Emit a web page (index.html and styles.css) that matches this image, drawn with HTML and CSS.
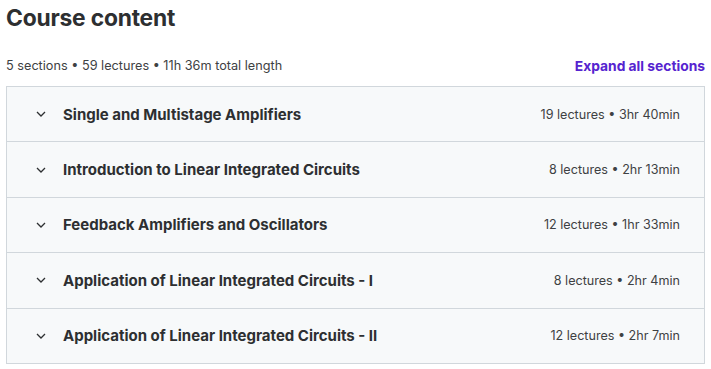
FILE: index.html
```html
<!DOCTYPE html>
<html lang="en">
<head>
  <meta charset="UTF-8" />
  <title>Course content</title>
  <link rel="stylesheet" href="styles.css">
</head>
<body>
  <main class="curriculum">
    <h2 class="curriculum-title">Course content</h2>

    <div class="curriculum-meta">
      <span>5 sections • 59 lectures • 11h 36m total length</span>
      <button class="expand-all">Expand all sections</button>
    </div>

    <ul class="section-list">
      <li class="section-row">
        <svg class="chevron" viewBox="0 0 10 6" width="10" height="6"><path d="M1 1l4 4 4-4" /></svg>
        <span class="section-name">Single and Multistage Amplifiers</span>
        <span class="section-info">19 lectures • 3hr 40min</span>
      </li>
      <li class="section-row">
        <svg class="chevron" viewBox="0 0 10 6" width="10" height="6"><path d="M1 1l4 4 4-4" /></svg>
        <span class="section-name">Introduction to Linear Integrated Circuits</span>
        <span class="section-info">8 lectures • 2hr 13min</span>
      </li>
      <li class="section-row">
        <svg class="chevron" viewBox="0 0 10 6" width="10" height="6"><path d="M1 1l4 4 4-4" /></svg>
        <span class="section-name">Feedback Amplifiers and Oscillators</span>
        <span class="section-info">12 lectures • 1hr 33min</span>
      </li>
      <li class="section-row">
        <svg class="chevron" viewBox="0 0 10 6" width="10" height="6"><path d="M1 1l4 4 4-4" /></svg>
        <span class="section-name">Application of Linear Integrated Circuits - I</span>
        <span class="section-info">8 lectures • 2hr 4min</span>
      </li>
      <li class="section-row">
        <svg class="chevron" viewBox="0 0 10 6" width="10" height="6"><path d="M1 1l4 4 4-4" /></svg>
        <span class="section-name">Application of Linear Integrated Circuits - II</span>
        <span class="section-info">12 lectures • 2hr 7min</span>
      </li>
    </ul>
  </main>
</body>
</html>
```

FILE: styles.css
```css
:root {
  --fg: #2d2f31;
  --muted: #3e4143;
  --accent: #5624d0;
  --border: #d1d7dc;
  --row-bg: #f7f9fa;
}

* {
  box-sizing: border-box;
}

body {
  margin: 0;
  font-family: Inter, "Noto Sans", sans-serif;
  color: var(--fg);
  background: #fff;
}

.curriculum {
  padding: 3px 6px 0 6px;
}

.curriculum-title {
  margin: 0;
  font-size: 22.8px;
  font-weight: 700;
  line-height: 30px;
  letter-spacing: -0.2px;
}

.curriculum-meta {
  display: flex;
  justify-content: space-between;
  align-items: center;
  margin-top: 23px;
  margin-bottom: 10px;
  font-size: 12.7px;
  line-height: 20px;
  color: var(--muted);
}

.expand-all {
  background: none;
  border: none;
  padding: 0;
  font-family: inherit;
  font-size: 13.8px;
  font-weight: 700;
  color: var(--accent);
  cursor: pointer;
}

.section-list {
  list-style: none;
  margin: 0;
  padding: 0;
  border: 1px solid var(--border);
  border-bottom: none;
}

.section-row {
  display: flex;
  align-items: center;
  height: 55.4px;
  padding: 0 24px 0 29px;
  background: var(--row-bg);
  border-bottom: 1px solid var(--border);
}

.chevron {
  flex: none;
  fill: none;
  stroke: var(--fg);
  stroke-width: 1.3;
  margin-right: 17px;
}

.section-name {
  flex: 1;
  font-size: 15px;
  font-weight: 700;
}

.section-info {
  font-size: 12.6px;
  color: var(--muted);
}
```
